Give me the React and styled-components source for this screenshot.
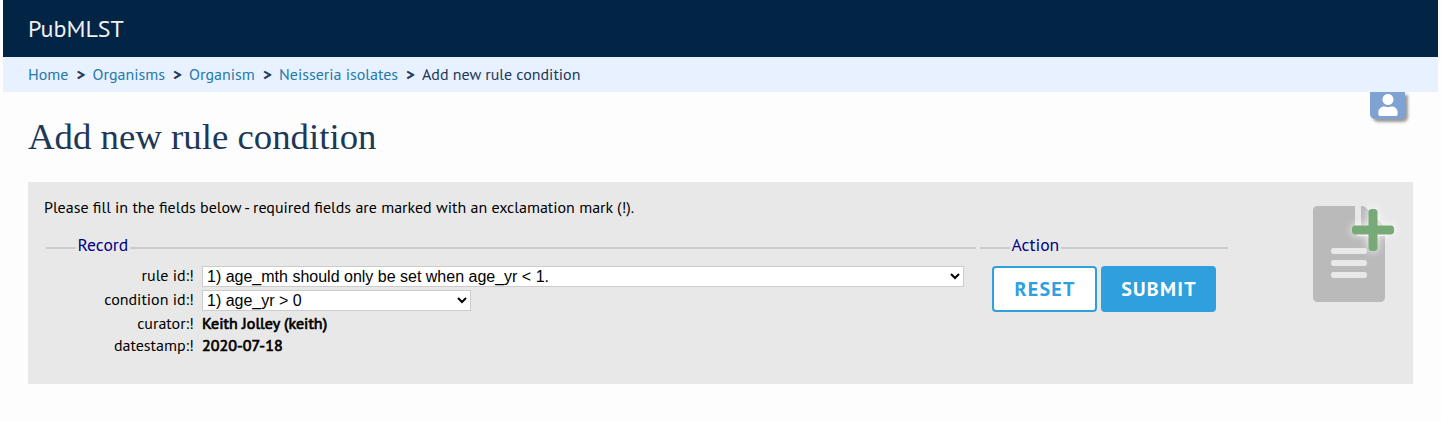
import React from "react";
import styled, { createGlobalStyle } from "styled-components";
import { FaFileAlt, FaPlus, FaUser } from "react-icons/fa";

const GlobalStyle = createGlobalStyle`
  * { box-sizing: border-box; }
  body {
    margin: 0;
    background: #fdfdfd;
    font-family: "PT Sans", "Lato", sans-serif;
    font-size: 16px;
    line-height: 22px;
    color: #000;
  }
`;

const Page = styled.div`
  margin: 0 3px;
`;

const Header = styled.header`
  height: 57px;
  padding: 0 25px;
  display: flex;
  align-items: center;
  background: #022545;
  color: #f0f0f0;
  font-size: 24px;
  line-height: 32px;
`;

const Breadcrumbs = styled.nav`
  height: 35px;
  padding: 0 25px 2px;
  display: flex;
  align-items: center;
  background: #e7f1ff;
  color: #1e3858;
  white-space: nowrap;
`;

const Crumb = styled.span`
  width: ${(p) => p.$width}px;
  color: ${(p) => (p.$link ? "#267aa9" : "#1e3858")};
`;

const Separator = styled.span`
  width: 24px;
  padding-left: 1px;
  text-align: center;
  -webkit-text-stroke: 0.8px #1e3858;
`;

const Main = styled.main`
  position: relative;
  padding: 0 25px;
`;

const UserTab = styled.button`
  position: absolute;
  top: 0;
  right: 33px;
  width: 35px;
  height: 27px;
  padding: 2px 0 0;
  display: flex;
  justify-content: center;
  align-items: flex-start;
  border: 0;
  border-radius: 0 0 5px 5px;
  background: #7ea3d2;
  color: #fff;
  box-shadow: 3px 3px 3px #999;
  clip-path: inset(0 -10px -10px -10px);
`;

const Title = styled.h1`
  margin: 0;
  padding-top: 23px;
  height: 90px;
  font-family: "Liberation Serif", serif;
  font-size: 36.8px;
  line-height: 44px;
  font-weight: 400;
  color: #1e3858;
`;

const Panel = styled.section`
  height: 202px;
  padding: 14px 16px;
  display: flex;
  justify-content: space-between;
  background: #e8e8e8;
`;

const Intro = styled.p`
  margin: 0 0 17px;
  white-space: nowrap;
`;

const Fieldsets = styled.div`
  display: flex;
  gap: 4px;
  padding-left: 2px;
`;

const Fieldset = styled.fieldset`
  width: ${(p) => p.$width}px;
  margin: 0;
  padding: 5px 12px 0;
  border: 0;
  border-top: 2px solid #ccc;
`;

const Legend = styled.legend`
  width: ${(p) => p.$width}px;
  height: 26px;
  margin-left: 18px;
  padding: 0 0 0 1.5px;
  color: navy;
  font-size: 17.6px;
  line-height: 20px;
`;

const Row = styled.div`
  display: flex;
  align-items: flex-start;
  height: ${(p) => p.$height}px;
`;

const Label = styled.label`
  width: 136px;
  margin-right: 8px;
  text-align: right;
  line-height: 18px;
`;

const Select = styled.select`
  width: ${(p) => p.$width}px;
  height: 21px;
  padding: 0;
  border: 1px solid #ccc;
  background: #fff;
  color: #000;
  font: 16px "Liberation Sans", sans-serif;
`;

const Value = styled.span`
  line-height: 18px;
  letter-spacing: 0.04px;
  -webkit-text-stroke: 0.7px #000;
`;

const Buttons = styled.div`
  display: flex;
  gap: 4px;
`;

const Button = styled.button`
  width: ${(p) => p.$width}px;
  height: 46px;
  padding: 0 0 0 1px;
  border: 2px solid #2f9fde;
  border-radius: 4px;
  background: ${(p) => (p.$primary ? "#2f9fde" : "#fff")};
  color: ${(p) => (p.$primary ? "#fff" : "#2f9fde")};
  font: 700 20px "PT Sans", "Lato", sans-serif;
  letter-spacing: 1.25px;
`;

const RecordIcon = styled.div`
  position: relative;
  width: 72px;
  height: 96px;
  margin: 10px 12px 0 0;
`;

const FileIcon = styled(FaFileAlt)`
  display: block;
  width: 72px;
  height: 96px;
  color: #bababa;
`;

const PlusIcon = styled(FaPlus)`
  position: absolute;
  left: 39px;
  top: 0;
  width: 42px;
  height: 48px;
  color: #78aa78;
  filter: drop-shadow(0 0 4px #fff);
`;

const crumbs = [
  ["Home", 40.5],
  ["Organisms", 72.5],
  ["Organism", 66],
  ["Neisseria isolates", 119],
];

export default function App() {
  return (
    <Page>
      <GlobalStyle />
      <Header>PubMLST</Header>
      <Breadcrumbs>
        {crumbs.map(([text, width]) => (
          <React.Fragment key={text}>
            <Crumb $link $width={width}>{text}</Crumb>
            <Separator>&gt;</Separator>
          </React.Fragment>
        ))}
        <Crumb $width={160}>Add new rule condition</Crumb>
      </Breadcrumbs>
      <Main>
        <UserTab aria-label="Account"><FaUser size={22} /></UserTab>
        <Title>Add new rule condition</Title>
        <Panel>
          <div>
            <Intro>
              Please fill in the fields below - required fields are marked with an exclamation mark (!).
            </Intro>
            <Fieldsets>
              <Fieldset $width={930}>
                <Legend $width={54}>Record</Legend>
                <Row $height={24}>
                  <Label>rule id:!</Label>
                  <Select $width={762}>
                    <option>1) age_mth should only be set when age_yr &lt; 1.</option>
                  </Select>
                </Row>
                <Row $height={24}>
                  <Label>condition id:!</Label>
                  <Select $width={269}>
                    <option>1) age_yr &gt; 0</option>
                  </Select>
                </Row>
                <Row $height={22}>
                  <Label>curator:!</Label>
                  <Value>Keith Jolley (keith)</Value>
                </Row>
                <Row $height={22}>
                  <Label>datestamp:!</Label>
                  <Value>2020-07-18</Value>
                </Row>
              </Fieldset>
              <Fieldset $width={248}>
                <Legend $width={51}>Action</Legend>
                <Buttons>
                  <Button type="reset" $width={105}>RESET</Button>
                  <Button type="submit" $primary $width={115}>SUBMIT</Button>
                </Buttons>
              </Fieldset>
            </Fieldsets>
          </div>
          <RecordIcon>
            <FileIcon />
            <PlusIcon />
          </RecordIcon>
        </Panel>
      </Main>
    </Page>
  );
}
